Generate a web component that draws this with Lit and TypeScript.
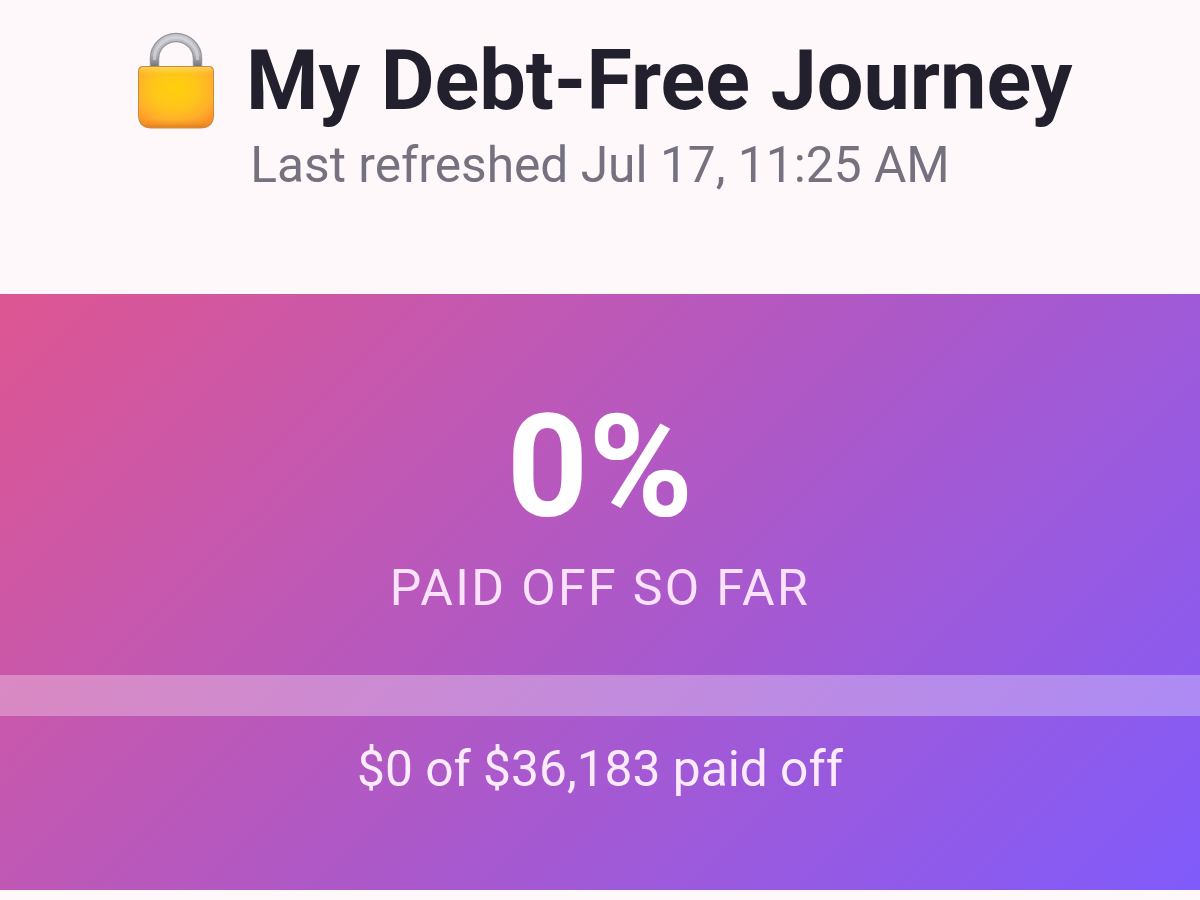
import { html, css, LitElement } from 'lit';
import { customElement, property } from 'lit/decorators.js';

@customElement('lock-icon')
class LockIcon extends LitElement {
  static styles = css`
    :host {
      display: block;
      width: 76px;
      height: 98px;
    }
    svg {
      display: block;
    }
  `;

  render() {
    return html`
      <svg width="76" height="98" viewBox="0 0 76 98">
        <defs>
          <radialGradient id="gold" cx="0.48" cy="0.36" r="0.75">
            <stop offset="0" stop-color="#ffcf0c" />
            <stop offset="0.4" stop-color="#ffc61a" />
            <stop offset="0.7" stop-color="#ffb02a" />
            <stop offset="1" stop-color="#fb8a2a" />
          </radialGradient>
          <linearGradient id="shade" x1="0" x2="0" y1="0" y2="1">
            <stop offset="0" stop-color="#ffdf70" stop-opacity="0.7" />
            <stop offset="0.14" stop-color="#ffd43a" stop-opacity="0" />
            <stop offset="0.86" stop-color="#f99a20" stop-opacity="0" />
            <stop offset="1" stop-color="#d9781e" stop-opacity="0.8" />
          </linearGradient>
          <linearGradient id="leg" gradientUnits="userSpaceOnUse" x1="0" x2="0" y1="2" y2="34">
            <stop offset="0" stop-color="#c6c5cb" />
            <stop offset="0.65" stop-color="#b3b2b8" />
            <stop offset="1" stop-color="#77757a" />
          </linearGradient>
        </defs>
        <path d="M16.500 34V26.500a21.500 21 0 0 1 43 0V34" fill="none" stroke="#96959b" stroke-width="9.500" />
        <path d="M16.500 34V26.500a21.500 21 0 0 1 43 0V34" fill="none" stroke="url(#leg)" stroke-width="7" />
        <path d="M16.500 28V26.500a21.500 21 0 0 1 43 0V28" fill="none" stroke="#dedee3" stroke-opacity="0.6" stroke-width="3" />
        <path d="M5 34H71Q76 34 76 39V83Q76 96.500 62 96.500H14Q0 96.500 0 83V39Q0 34 5 34Z" fill="#c88c3e" />
        <path d="M5.500 35H70.500Q75 35 75 39.500V82.500Q75 95.500 61.500 95.500H14.500Q1 95.500 1 82.500V39.500Q1 35 5.500 35Z" fill="url(#gold)" />
        <path d="M5.500 35H70.500Q75 35 75 39.500V82.500Q75 95.500 61.500 95.500H14.500Q1 95.500 1 82.500V39.500Q1 35 5.500 35Z" fill="url(#shade)" />
      </svg>
    `;
  }
}

@customElement('progress-card')
class ProgressCard extends LitElement {
  @property({ type: Number }) paid = 0;
  @property({ type: Number }) total = 0;

  static styles = css`
    :host {
      display: block;
      height: 596px;
      box-sizing: border-box;
      padding-top: 102px;
      text-align: center;
      color: #fff;
      background: linear-gradient(135deg, #de5692 0%, #805bfb 100%);
    }
    .percent {
      font-size: 142px;
      font-weight: 700;
      line-height: 144px;
    }
    .label {
      margin-top: 18px;
      font-size: 50px;
      line-height: 60px;
      letter-spacing: 2.35px;
      color: #fbe2fb;
    }
    .track {
      height: 41px;
      margin-top: 57px;
      background: rgba(255, 255, 255, 0.3);
    }
    .fill {
      height: 100%;
      background: #fff;
    }
    .amount {
      margin-top: 23px;
      font-size: 49.7px;
      line-height: 60px;
      color: #fcebfd;
    }
  `;

  render() {
    const percent = this.total ? Math.round((this.paid / this.total) * 100) : 0;

    return html`
      <div class="percent">${percent}%</div>
      <div class="label">PAID OFF SO FAR</div>
      <div class="track"><div class="fill" style="width: ${percent}%"></div></div>
      <div class="amount">$${this.paid} of $${this.total.toLocaleString('en-US')} paid off</div>
    `;
  }
}

@customElement('app-root')
class AppRoot extends LitElement {
  static styles = css`
    :host {
      display: block;
      height: 900px;
      overflow: hidden;
      background: #fff8fb;
      font-family: Roboto, sans-serif;
    }
    header {
      height: 294px;
      box-sizing: border-box;
      padding-top: 32px;
    }
    .title {
      display: flex;
      gap: 32px;
      padding-left: 138px;
      height: 98px;
    }
    h1 {
      margin: 0;
      font-size: 82.8px;
      font-weight: 700;
      line-height: 98px;
      white-space: nowrap;
      color: #22202c;
    }
    .refreshed {
      margin-top: 5px;
      text-align: center;
      font-size: 49.7px;
      line-height: 60px;
      color: #75717e;
    }
  `;

  render() {
    return html`
      <header>
        <div class="title">
          <lock-icon></lock-icon>
          <h1>My Debt-Free Journey</h1>
        </div>
        <div class="refreshed">Last refreshed Jul 17, 11:25 AM</div>
      </header>
      <progress-card .paid=${0} .total=${36183}></progress-card>
    `;
  }
}
